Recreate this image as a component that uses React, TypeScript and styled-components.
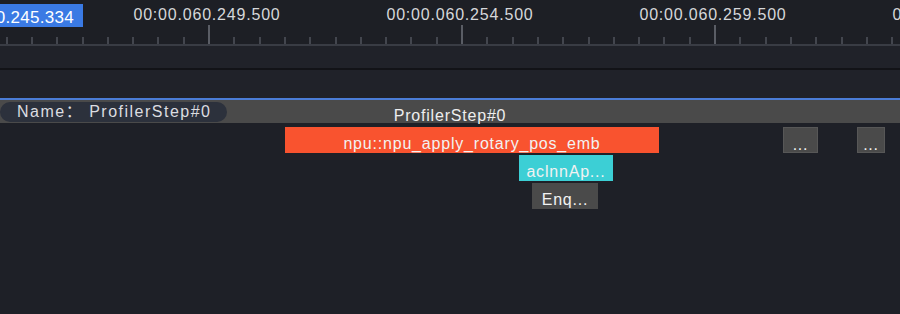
import React from 'react';
import styled, { createGlobalStyle } from 'styled-components';

const Global = createGlobalStyle`
  html, body { margin: 0; padding: 0; background: #1e2027; }
  body { font-family: "Liberation Sans", "Noto Sans CJK SC", sans-serif; }
`;

const Screen = styled.div`
  width: 900px;
  height: 314px;
  overflow: hidden;
  background: #1e2027;
  display: flex;
  flex-direction: column;
  color: #ececec;
`;

const Ruler = styled.div`
  flex: none;
  display: flex;
  flex-direction: column;
  background: #1d1f25;
`;

const LabelRow = styled.div`
  position: relative;
  height: 25px;
`;

const TimeLabel = styled.div<{ $x: number }>`
  position: absolute;
  top: 6px;
  left: ${(p) => p.$x - 2}px;
  transform: translateX(-50%);
  font-size: 16px;
  line-height: 18px;
  letter-spacing: 0.8px;
  color: #d6d7da;
  white-space: nowrap;
`;

const Cursor = styled.div`
  position: absolute;
  left: 0;
  top: 4px;
  width: 83px;
  height: 23px;
  background: #3a7ae4;
  overflow: hidden;
  display: flex;
  justify-content: flex-end;
  box-sizing: border-box;
  padding: 3px 9px 0 0;
  font-size: 17px;
  line-height: 22px;
  letter-spacing: 0.3px;
  color: #ffffff;
  white-space: nowrap;
`;

const TickSvg = styled.svg`
  display: block;
  width: 900px;
  height: 19px;
`;

const Rule = styled.div<{ $h: number; $c: string }>`
  flex: none;
  height: ${(p) => p.$h}px;
  background: ${(p) => p.$c};
`;

const Band = styled.div<{ $h: number }>`
  flex: none;
  height: ${(p) => p.$h}px;
  background: #202229;
`;

const StepRow = styled.div`
  position: relative;
  flex: none;
  height: 23px;
  box-sizing: border-box;
  padding-top: 5px;
  background: #4a4a4a;
  text-align: center;
  font-size: 16px;
  line-height: 22px;
  letter-spacing: 0.8px;
  color: #eeeeee;
`;

const NamePill = styled.div`
  position: absolute;
  left: 0;
  top: 2px;
  width: 227px;
  height: 20px;
  border-radius: 10px;
  background: #2c313c;
  box-sizing: border-box;
  padding-left: 17px;
  text-align: left;
  font-size: 16px;
  line-height: 20px;
  letter-spacing: 1.5px;
  color: #dcdde0;
  white-space: nowrap;
`;

const Flame = styled.div`
  position: relative;
  flex: 1;
`;

const Slice = styled.div<{ $x: number; $y: number; $w: number; $c: string; $b?: string }>`
  position: absolute;
  left: ${(p) => p.$x}px;
  top: ${(p) => p.$y}px;
  width: ${(p) => p.$w}px;
  height: 26px;
  box-sizing: border-box;
  padding-top: 4px;
  background: ${(p) => p.$c};
  border: ${(p) => (p.$b ? `1px solid ${p.$b}` : 'none')};
  text-align: center;
  font-size: 16px;
  line-height: 26px;
  letter-spacing: 0.8px;
  color: #f2f2f2;
  white-space: nowrap;
`;

const majors = [
  { x: 209, t: '00:00.060.249.500' },
  { x: 462, t: '00:00.060.254.500' },
  { x: 715, t: '00:00.060.259.500' },
  { x: 968, t: '00:00.060.264.500' },
];

const ticks: { x: number; major: boolean }[] = [];
for (let k = -8; k <= 27; k++) {
  const x = Math.round(209 + 25.3 * k);
  if (x > 0 && x < 900) ticks.push({ x, major: k % 10 === 0 });
}

const slices = [
  { x: 285, y: 4, w: 374, c: '#f9532f', t: 'npu::npu_apply_rotary_pos_emb' },
  { x: 519, y: 32, w: 94, c: '#3ccfd5', t: 'aclnnAp...' },
  { x: 532, y: 60, w: 66, c: '#4a4a4a', t: 'Enq...' },
  { x: 783, y: 4, w: 35, c: '#4a4a4a', t: '...', b: '#575757' },
  { x: 857, y: 4, w: 28, c: '#4a4a4a', t: '...', b: '#575757' },
];

export default function App() {
  return (
    <>
      <Global />
      <Screen>
        <Ruler>
          <LabelRow>
            {majors.map((m) => (
              <TimeLabel key={m.t} $x={m.x}>
                {m.t}
              </TimeLabel>
            ))}
            <Cursor>00:00.060.245.334</Cursor>
          </LabelRow>
          <TickSvg viewBox="0 0 900 19">
            {ticks.map((t, i) =>
              t.major ? (
                <rect key={i} x={t.x - 1} y={0} width={2} height={19} fill="#5a5d65" />
              ) : (
                <rect key={i} x={t.x - 1} y={12} width={2} height={7} fill="#43464e" />
              )
            )}
          </TickSvg>
          <Rule $h={2} $c="#393c44" />
        </Ruler>
        <Band $h={22} />
        <Rule $h={2} $c="#121317" />
        <Band $h={28} />
        <Rule $h={2} $c="#4b7dd6" />
        <StepRow>
          <NamePill>Name： ProfilerStep#0</NamePill>
          ProfilerStep#0
        </StepRow>
        <Flame>
          {slices.map((s, i) => (
            <Slice key={i} $x={s.x} $y={s.y} $w={s.w} $c={s.c} $b={s.b}>
              {s.t}
            </Slice>
          ))}
        </Flame>
      </Screen>
    </>
  );
}
